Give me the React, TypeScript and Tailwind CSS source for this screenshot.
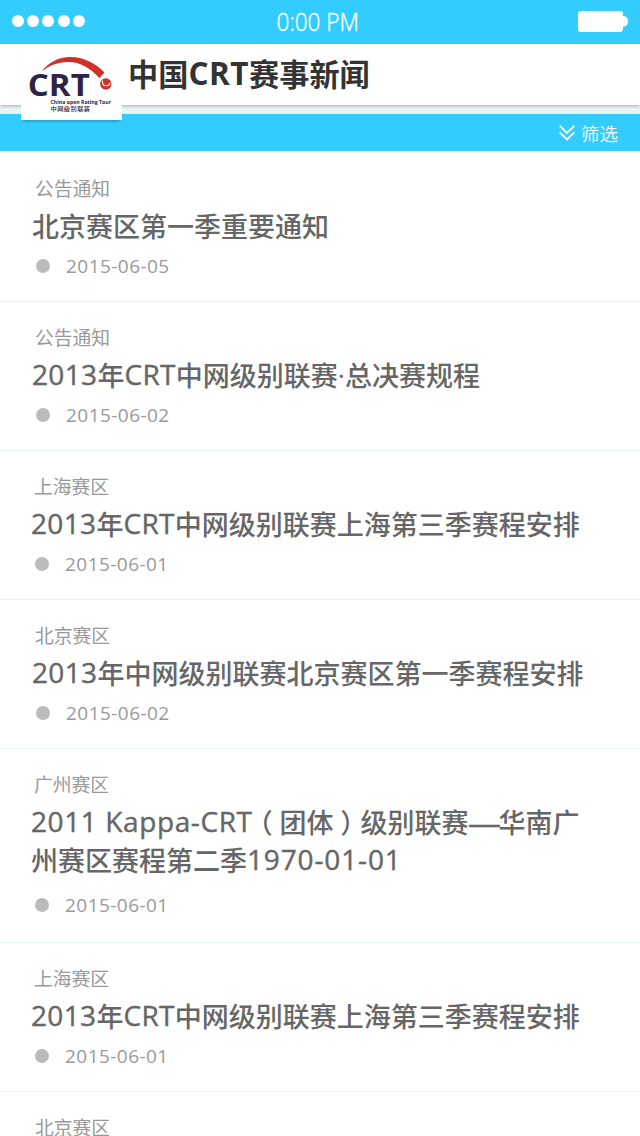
type Item = { category: string; lines: string[]; date: string; shift?: boolean };

const items: Item[] = [
  { category: '公告通知', lines: ['北京赛区第一季重要通知'], date: '2015-06-05', shift: true },
  { category: '公告通知', lines: ['2013年CRT中网级别联赛·总决赛规程'], date: '2015-06-02', shift: true },
  { category: '上海赛区', lines: ['2013年CRT中网级别联赛上海第三季赛程安排'], date: '2015-06-01' },
  { category: '北京赛区', lines: ['2013年中网级别联赛北京赛区第一季赛程安排'], date: '2015-06-02', shift: true },
  { category: '广州赛区', lines: ['2011 Kappa-CRT（团体）级别联赛—华南广', '州赛区赛程第二季1970-01-01'], date: '2015-06-01' },
  { category: '上海赛区', lines: ['2013年CRT中网级别联赛上海第三季赛程安排'], date: '2015-06-01' },
];

function Mixed({ text }: { text: string }) {
  return (
    <>
      {text.split(/([A-Za-z0-9\- ]+|（|）|—)/).map((part, i) => {
        if (part === '（' || part === '）')
          return (
            <span key={i} className="inline-block w-[27px] text-center leading-none [font-feature-settings:'halt']">
              {part}
            </span>
          );
        if (part === '—')
          return (
            <span key={i} className="inline-block w-[30px] origin-left -translate-x-px scale-x-[1.22] leading-none [-webkit-text-stroke:0.5px_#666]">
              {part}
            </span>
          );
        if (/^[A-Za-z0-9\- ]+$/.test(part))
          return (
            <span
              key={i}
              className={`align-[1px] text-[28px] leading-none [-webkit-text-stroke:0.4px_#666] ${part.startsWith('2011') ? 'tracking-[0.6px]' : part.includes('-') ? 'tracking-[0.85px]' : 'tracking-[0.35px]'}`}
            >
              {part}
            </span>
          );
        return part;
      })}
    </>
  );
}

function Logo() {
  return (
    <svg viewBox="0 0 101 76" className="h-[76px] w-[101px]">
      <path d="M20.500 27.500C28 18 38 13 49 13C63 13 74 19 83.500 28.500L78.500 34C69 24 60 18.500 49 18C38 17.500 29 21 20.500 27.500Z" fill="#cf3029" />
      <circle cx="84.800" cy="40" r="5.700" fill="#cf3029" />
      <path d="M81.500 36.500Q81 42 85 41.800T89 38.500" fill="none" stroke="#fff" strokeWidth="1.100" />
      <g fill="#2e2344" fontFamily="'Open Sans','Noto Sans CJK SC',sans-serif">
        <text x="6.800" y="51.500" fontSize="30" fontWeight="700" textLength="62" lengthAdjust="spacingAndGlyphs">CRT</text>
        <text x="29.500" y="59.500" fontSize="6" fontWeight="700" textLength="60.5" lengthAdjust="spacingAndGlyphs">China open Rating Tour</text>
        <text x="29.500" y="67.300" fontSize="6.200" fontWeight="500" textLength="39.500">中网级别联赛</text>
      </g>
    </svg>
  );
}

export default function App() {
  return (
    <div className="h-[1136px] w-[640px] overflow-hidden bg-white font-['Open_Sans','Noto_Sans_CJK_SC',sans-serif]">
      <div className="grid h-11 grid-cols-3 items-center bg-[#33ccff] pr-3 pl-3 text-white">
        <div className="flex gap-[3.2px] pb-[2px]">
          {[0, 1, 2, 3, 4].map((n) => (
            <span key={n} className="h-[12.5px] w-3 rounded-full bg-white" />
          ))}
        </div>
        <div className="pr-1 pb-[2px] text-center text-[25px] leading-none font-light">
          <span className="inline-block scale-x-[0.9] whitespace-nowrap [-webkit-text-stroke:0.4px_#fff]">0:00 PM</span>
        </div>
        <div className="flex items-center justify-end pb-[2px]">
          <span className="h-[21px] w-[45px] rounded-[3px] bg-white" />
          <span className="h-[11px] w-[5px] rounded-r-full bg-white" />
        </div>
      </div>
      <header className="relative z-10 flex h-[61px] items-start bg-white pl-[21px] shadow-[0_2px_3px_-1px_rgba(0,0,0,0.3)]">
        <div className="h-[76px] w-[101px] shrink-0 bg-white shadow-[0_3px_3px_-2px_rgba(0,0,0,0.3)]">
          <Logo />
        </div>
        <h1 className="ml-[6px] pt-[9px] text-[30.2px] leading-[44px] font-bold text-[#333]">
          中国<span className="align-[1px] text-[31.5px] leading-none tracking-[0.5px]">CRT</span>赛事新闻
        </h1>
      </header>
      <div className="h-[9px] bg-[#eaf3f4]" />
      <div className="flex h-[37px] items-center justify-end gap-[6px] bg-[#33ccff] pr-[22px] text-white">
        <svg viewBox="0 0 16 16" className="h-4 w-4" fill="none" stroke="currentColor" strokeWidth="1.8">
          <path d="M.7.800L8 8L15.300.800M.700 7.300L8 14.500L15.300 7.300" />
        </svg>
        <span className="pt-[2px] text-[18.500px] leading-6 font-[350]">筛选</span>
      </div>
      <div className="h-[2px] bg-[#f5fafa]" />
      {items.map((item, k) => (
        <article key={k} className={`border-b border-[#e9f3f2] pt-[23px] pb-[18px] ${item.shift ? 'pl-8' : 'pl-[31px]'}`}>
          <div className="h-[26px] pl-[3px] text-[18.8px] leading-[26px] text-[#999]">{item.category}</div>
          <div className="pt-[6px] text-[27px] font-medium whitespace-nowrap text-[#666]">
            {item.lines.map((line) => (
              <div key={line} className="h-[38px] leading-[38px]"><Mixed text={line} /></div>
            ))}
          </div>
          <div className={`flex h-[35px] items-center pl-1 text-[19px] tracking-[0.45px] text-[#999] ${item.lines.length > 1 ? 'mt-[7px] mb-[2px]' : 'mt-[2px]'}`}>
            <span className="mr-4 h-[14px] w-[14px] rounded-full bg-[#bbb]" />
            <span className="pt-px">{item.date}</span>
          </div>
        </article>
      ))}
      <article className="pt-[23px] pl-8">
        <div className="h-[21px] pl-[3px] text-[18.8px] leading-[26px] text-[#999]">北京赛区</div>
      </article>
    </div>
  );
}
